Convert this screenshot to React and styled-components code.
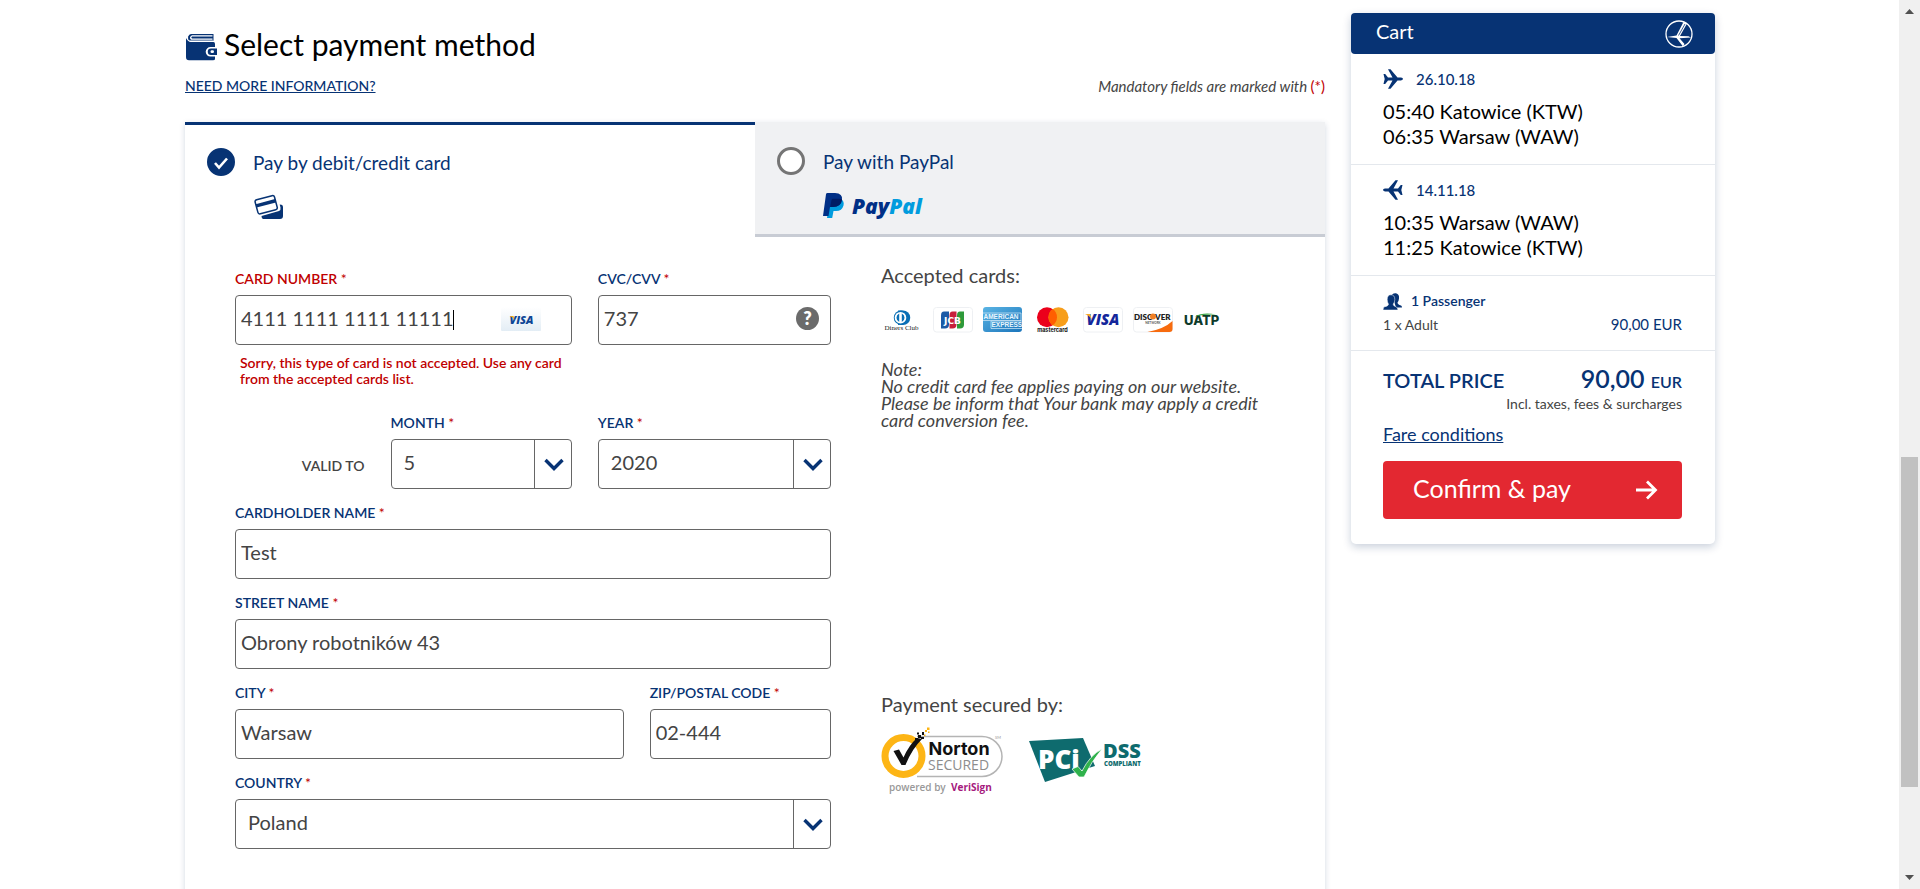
import React from "react";
import styled, { createGlobalStyle, css } from "styled-components";

const navy = "#073374";
const grey = "#444444";
const red = "#bf0000";
const line = "#e4e8ed";

const GlobalStyle = createGlobalStyle`
  *, *::before, *::after { box-sizing: border-box; }
  html, body { margin: 0; padding: 0; background: #ffffff; }
  body { font-family: Lato, "Open Sans", sans-serif; color: ${grey}; overflow: hidden; }
  button, input, select { font-family: inherit; }
  svg { display: block; flex: none; }
`;

const Page = styled.div`
  display: flex;
  height: 100vh;
  overflow: hidden;
`;

const Viewport = styled.div`
  flex: 1;
  min-width: 0;
  display: flex;
  justify-content: center;
  padding-left: 1px;
`;

const Container = styled.div`
  flex: 1;
  max-width: 1530px;
  display: flex;
  gap: 26px;
`;

const Main = styled.main`
  flex: 1;
  min-width: 0;
  display: flex;
  flex-direction: column;
  padding-top: 25px;
`;

const Heading = styled.h1`
  display: flex;
  align-items: center;
  gap: 6px;
  margin: 0;
  font-size: 30px;
  line-height: 38px;
  font-weight: 400;
  color: #000000;

  svg { margin-top: 6px; }
`;

const IntroRow = styled.div`
  display: flex;
  justify-content: space-between;
  margin: 13px 0 26px;
  font-size: 15px;
  line-height: 20px;
`;

const InfoLink = styled.a`
  color: ${navy};
  font-size: 14px;
  font-weight: 500;
`;

const Mandatory = styled.span`
  font-style: italic;
`;

const Star = styled.span`
  color: ${red};
  font-style: normal;
  font-weight: 400;
`;

const Panel = styled.section`
  flex: 1 0 auto;
  background: #ffffff;
  box-shadow: 0 2px 6px rgba(10, 40, 90, 0.18);
`;

const Tabs = styled.div`
  display: grid;
  grid-template-columns: 1fr 1fr;
`;

const Tab = styled.div`
  display: grid;
  grid-template-columns: 28px 1fr;
  column-gap: 18px;
  row-gap: 16px;
  align-content: start;
  height: 115px;
  padding: 23px 22px 0;
  ${(p) =>
    p.$active
      ? css`
          border-top: 3px solid ${navy};
          background: #ffffff;
        `
      : css`
          padding-top: 25px;
          border-bottom: 3px solid #c8ccd4;
          background: #f0f1f3;
        `}
`;

const TabLabel = styled.label`
  font-size: 19px;
  line-height: 30px;
  color: ${navy};
`;

const TabLogo = styled.div`
  grid-column: 2;
`;

const RadioWrap = styled.span`
  position: relative;
  width: 28px;
  height: 28px;

  svg {
    position: absolute;
    inset: 0;
    pointer-events: none;
  }
`;

const Radio = styled.input`
  appearance: none;
  display: block;
  width: 28px;
  height: 28px;
  margin: 0;
  border: 3px solid #757575;
  border-radius: 50%;
  background: #ffffff;

  &:checked {
    border-color: ${navy};
    background: ${navy};
  }
`;

const Body = styled.div`
  display: grid;
  grid-template-columns: 596fr 394fr;
  column-gap: 50px;
  padding: 26px 50px 50px;
`;

const Form = styled.form`
  display: grid;
  grid-template-columns: repeat(12, minmax(0, 1fr));
  column-gap: 26px;
  row-gap: 14px;
  margin-top: 6px;
`;

const FieldBox = styled.div`
  grid-column: ${(p) => p.$col};
  display: flex;
  flex-direction: column;
`;

const FieldLabel = styled.label`
  margin-bottom: 6px;
  font-size: 14px;
  line-height: 20px;
  font-weight: 600;
  color: ${(p) => (p.$error ? red : navy)};
`;

const Control = styled.div`
  position: relative;
`;

const controlStyle = css`
  display: block;
  width: 100%;
  height: 50px;
  border: 1px solid #666666;
  border-radius: 4px;
  background: #ffffff;
  color: ${grey};
  font-size: 20px;
  outline: none;
`;

const TextInput = styled.input`
  ${controlStyle}
  padding: 0 5px 4px;
`;

const Select = styled.select`
  ${controlStyle}
  appearance: none;
  padding: 0 40px 4px 12px;
`;

const SelectArrow = styled.span`
  position: absolute;
  top: 1px;
  right: 1px;
  bottom: 1px;
  width: 37px;
  display: flex;
  align-items: center;
  justify-content: center;
  padding-left: 2px;
  border-left: 1px solid #666666;
  pointer-events: none;
`;

const Caret = styled.span`
  position: absolute;
  left: 218px;
  top: 15px;
  width: 1px;
  height: 20px;
  background: #000000;
`;

const CardBadge = styled.span`
  position: absolute;
  right: 31px;
  top: 12px;
`;

const HelpButton = styled.button`
  position: absolute;
  right: 12px;
  top: 12px;
  width: 23px;
  height: 23px;
  padding: 0;
  border: 0;
  border-radius: 50%;
  background: #6b6b6b;
  color: #ffffff;
  font-size: 18px;
  line-height: 23px;
  font-weight: 800;
`;

const ErrorText = styled.p`
  margin: 10px 0 12px 5px;
  font-size: 14px;
  line-height: 16px;
  font-weight: 600;
  color: ${red};
`;

const ValidTo = styled.div`
  grid-column: 1 / span 3;
  margin-top: 43px;
  font-size: 14px;
  line-height: 20px;
  font-weight: 600;
  text-align: right;
`;

const Side = styled.div`
  display: flex;
  flex-direction: column;
  justify-content: space-between;
  padding-bottom: 54px;
`;

const SideTitle = styled.h2`
  margin: 0;
  font-size: 20px;
  line-height: 24px;
  font-weight: 400;
`;

const Cards = styled.div`
  display: flex;
  gap: 10px;
  padding: 20px 0 28px 2px;
`;

const Note = styled.p`
  margin: 0;
  max-width: 390px;
  font-size: 18px;
  line-height: 17px;
  font-style: italic;
`;

const Seals = styled.div`
  display: flex;
  align-items: center;
  gap: 24px;
  margin-top: 11px;
`;

const Cart = styled.aside`
  flex: none;
  align-self: flex-start;
  width: 364px;
  margin-top: 13px;
  padding-bottom: 25px;
  border-radius: 5px;
  background: #ffffff;
  box-shadow: 0 3px 8px rgba(10, 40, 90, 0.22);
`;

const CartHeader = styled.header`
  display: flex;
  align-items: center;
  justify-content: space-between;
  height: 41px;
  padding: 0 22px 0 25px;
  border-radius: 4px;
  background: ${navy};
  color: #ffffff;
`;

const CartTitle = styled.h2`
  margin: 0 0 6px;
  font-size: 20px;
  line-height: 24px;
  font-weight: 400;
`;

const CartBlock = styled.div`
  padding: ${(p) => p.$pad};
  border-bottom: ${(p) => (p.$last ? "0" : `1px solid ${line}`)};
`;

const CartMeta = styled.div`
  display: flex;
  align-items: center;
  gap: ${(p) => p.$gap || "13px"};
  font-size: ${(p) => p.$size || "15px"};
  line-height: 20px;
  font-weight: ${(p) => p.$weight || 500};
  color: ${navy};
`;

const Leg = styled.div`
  font-size: 20px;
  line-height: 25px;
  color: #000000;
`;

const Legs = styled.div`
  margin-top: 10px;
`;

const SplitRow = styled.div`
  display: flex;
  align-items: baseline;
  justify-content: space-between;
  font-size: ${(p) => p.$size};
  line-height: ${(p) => p.$line};
  font-weight: ${(p) => p.$weight || 400};
`;

const Amount = styled.span`
  color: ${navy};
  font-size: ${(p) => p.$size};
`;

const Total = styled.span`
  font-size: 20px;
  color: ${navy};
`;

const Currency = styled.small`
  font-size: 16px;
`;

const Taxes = styled.div`
  font-size: 14px;
  line-height: 16px;
  text-align: right;
`;

const FareLink = styled.a`
  display: inline-block;
  margin: 10px 0 15px;
  font-size: 18px;
  line-height: 24px;
  color: ${navy};
`;

const PayButton = styled.button`
  display: flex;
  align-items: center;
  justify-content: space-between;
  width: 100%;
  height: 58px;
  padding: 0 24px 4px 30px;
  border: 0;
  border-radius: 4px;
  background: #e32831;
  color: #ffffff;
  font-size: 25px;

  svg { margin-top: 4px; }
`;

const ScrollTrack = styled.div`
  flex: none;
  display: flex;
  flex-direction: column;
  align-items: center;
  justify-content: space-between;
  width: 21px;
  padding: 9px 0;
  background: #f0f0f0;
`;

const ScrollRail = styled.div`
  flex: 1;
  display: flex;
  flex-direction: column;
  align-self: stretch;
  margin: 0 2px;

  &::before { content: ""; flex: 443 0 0; }
  &::after { content: ""; flex: 88 0 0; }
`;

const ScrollThumb = styled.div`
  flex: 330 0 0;
  background: #c1c1c1;
`;

const Wallet = () => (
  <svg width="33" height="28" viewBox="0 0 33 28" aria-hidden="true">
    <path d="M6 1h22.500v7H5Q2.500 7 3.200 3.500 4 1 6 1z" fill={navy} />
    <path d="M7 2.300h20.500v1.200H7q-1.500 1 0 2h20.500v1.200H6Q3.500 4.500 7 2.300z" fill="#fff" />
    <path d="M1 5q2 4 5 4h22.500q1.500 0 1.500 2v3h-4.500a4.800 4.800 0 0 0 0 9.600H30V26q0 1.300-2 1.300H4Q1 27.300 1 24z" fill={navy} />
    <path d="M4 7.600h24.500v1.200H6q-1.500 0-2-1.200z" fill="#fff" />
    <path d="M26 15.500h6v6.500h-6a3.250 3.250 0 0 1 0-6.500z" fill={navy} />
    <rect x="25.500" y="17.300" width="3.500" height="2.800" rx="1.400" fill="#fff" />
  </svg>
);

const CreditCards = () => (
  <svg width="30" height="27" viewBox="-1 1 30 27" aria-hidden="true">
    <path d="M9 26q-1.500-.5-1.500-3L25 18q2-1 1.500-3.500l-.8-3 1.800.3q1.500.4 1.500 2.200v9q0 3-3 3z" fill={navy} />
    <g transform="rotate(-15 12 11)">
      <rect x="2" y="4.500" width="20" height="14.500" rx="2" fill="#fff" stroke={navy} strokeWidth="1.500" />
      <path d="M2 8.500h20v3.500H2z" fill={navy} />
    </g>
  </svg>
);

const PayPalLogo = () => (
  <svg width="102" height="28" viewBox="0 0 102 28" role="img" aria-label="PayPal">
    <path d="M7 6h11q3.500 2 2.500 6.500Q19 18 13 18h-2.500L9.200 25H4z" fill="#019cde" />
    <path d="M4.500 0H12q8 .3 7 7-1.200 7-9 7H7L5.500 23H0L3 1.200Q3.200 0 4.500 0z" fill="#002f86" />
    <path d="M8.500 7q.3-1.200 1.500-1.200h7q1.200 0 2 .7Q18 14 10 14H7.200z" fill="#001c64" />
    <text y="21" x="29" fontFamily="Open Sans, Lato, sans-serif" fontSize="21" fontWeight="800" fontStyle="italic">
      <tspan fill="#002f86">Pay</tspan><tspan fill="#019cde">Pal</tspan>
    </text>
  </svg>
);

const Chevron = () => (
  <svg width="20" height="13" viewBox="0 0 20 13" aria-hidden="true">
    <path d="M1.500 2l8.500 8.500L18.500 2" fill="none" stroke={navy} strokeWidth="3.400" />
  </svg>
);

const CardFrame = ({ label, children }) => (
  <svg width="40" height="26" viewBox="0 0 40 26" role="img" aria-label={label}>
    {children}
  </svg>
);

const Outline = () => <rect x=".5" y=".5" width="39" height="24.500" rx="3" fill="#fff" stroke="#eef0f3" />;

const Diners = () => (
  <CardFrame label="Diners Club">
    <path d="M15 3.500h5a7.200 7.200 0 0 1 0 14.500h-5z" fill="#0a6fb5" />
    <circle cx="18" cy="10.700" r="7.200" fill="#0a6fb5" />
    <circle cx="17.500" cy="10.700" r="5.800" fill="#fff" />
    <path d="M16.200 6.500a4.600 4.600 0 0 0 0 8.400zM18.800 6.500a4.600 4.600 0 0 1 0 8.400z" fill="#0a6fb5" />
    <text x="18.500" y="22.500" textAnchor="middle" fontSize="7" fontFamily="Liberation Serif, serif" fill="#222">Diners Club</text>
  </CardFrame>
);

const Jcb = () => (
  <CardFrame label="JCB">
    <Outline />
    <path d="M11 4.500h5v13q0 4-4 4H8v-13q0-4 3-4z" fill="#1b5aa6" />
    <path d="M19.500 4.500h4v13q0 4-4 4h-3v-13q0-4 3-4z" fill="#c8203c" />
    <path d="M27 4.500h4v13q0 4-4 4h-3v-13q0-4 3-4z" fill="#2e9a3a" />
    <text x="19.500" y="16.500" textAnchor="middle" fontSize="9" fontWeight="700" fontFamily="DejaVu Sans, sans-serif" fill="#fff">JCB</text>
  </CardFrame>
);

const Amex = () => (
  <CardFrame label="American Express">
    <defs>
      <linearGradient id="amex" x1="0" x2="1" y1="0" y2="1">
        <stop offset="0" stopColor="#5ab4e4" />
        <stop offset="1" stopColor="#1b75bb" />
      </linearGradient>
    </defs>
    <rect y="0" width="39" height="25" rx="3" fill="url(#amex)" />
    <path d="M0 6h38v7.500H0M39 14H8v7.500h31" fill="none" stroke="#d7edf9" strokeWidth=".7" />
    <g fontFamily="Liberation Sans, sans-serif" fontSize="6.500" fontWeight="700" fill="#e8f5fd">
      <text x=".5" y="12">AMERICAN</text>
      <text x="8.500" y="20">EXPRESS</text>
    </g>
  </CardFrame>
);

const Mastercard = () => (
  <CardFrame label="Mastercard">
    <circle cx="14" cy="10.200" r="10" fill="#eb001b" />
    <circle cx="25.500" cy="10.200" r="10" fill="#f79e1b" />
    <path d="M19.700 2a10 10 0 0 1 0 16.400 10 10 0 0 1 0-16.400z" fill="#ff5f00" />
    <text x="19.500" y="24.500" textAnchor="middle" fontSize="5.500" fontWeight="700" fontFamily="Inter, sans-serif" fill="#111">mastercard</text>
  </CardFrame>
);

const Visa = () => (
  <CardFrame label="Visa">
    <Outline />
    <text x="20" y="18" textAnchor="middle" fontSize="15" fontWeight="800" fontStyle="italic" fontFamily="Open Sans, sans-serif" fill="#14279b">VISA</text>
    <path d="M2 7h5l2 6q-2.500-4.500-7-6z" fill="#f7a823" />
  </CardFrame>
);

const Discover = () => (
  <CardFrame label="Discover">
    <Outline />
    <path d="M14.500 25Q31 22 39.500 14v8q0 3-3 3z" fill="#f76b0e" />
    <g fontFamily="Lato, sans-serif" fontWeight="800" fontSize="8" fill="#222">
      <text x="1" y="12.500">DISC</text>
      <text x="22" y="12.500">VER</text>
    </g>
    <circle cx="20" cy="9.600" r="3" fill="#f08026" />
    <text x="20" y="17" fontSize="3" fontWeight="700" fontFamily="Lato, sans-serif" textAnchor="middle" fill="#555">NETWORK</text>
  </CardFrame>
);

const Uatp = () => (
  <CardFrame label="UATP">
    <text x="1" y="18" fontSize="13" fontWeight="800" fontFamily="Inter, sans-serif" fill="#0e3b2b">UATP</text>
    <path d="M11.500 9.500Q20 5 33 7.500q-12-.5-21.500 2z" fill="#3da648" />
  </CardFrame>
);

const InlineVisa = () => (
  <svg width="40" height="24" viewBox="0 0 40 24" role="img" aria-label="Visa">
    <defs>
      <linearGradient id="visaBg" x1="0" x2="0" y1="0" y2="1">
        <stop offset="0" stopColor="#ffffff" />
        <stop offset="1" stopColor="#e3edf5" />
      </linearGradient>
    </defs>
    <rect width="40" height="24" rx="1" fill="url(#visaBg)" />
    <text x="20.500" y="17" textAnchor="middle" fontSize="11" fontWeight="800" fontStyle="italic" fontFamily="Open Sans, sans-serif" fill="#0e4595">VISA</text>
    <path d="M8.500 9h4l1 4q-1.500-3-5-4z" fill="#f2ae14" />
  </svg>
);

const Norton = () => (
  <svg width="124" height="68" viewBox="0 0 124 68" role="img" aria-label="Norton Secured">
    <path d="M36 9.500h65a20 20 0 0 1 0 40H36" fill="#fff" stroke="#b4b4b4" strokeWidth="1.500" />
    <circle cx="22.500" cy="29" r="18.500" fill="#fff" stroke="#fdb515" strokeWidth="7" />
    <path d="M12.500 24l5.500-1.500 4.500 8Q28 18 36 11l5 1Q31 22 24.500 38h-4z" fill="#111" />
    <path d="M37 8h3v3h-3zM41 5h2v3h-2zM40 10h3v2h-3zM34 11h3v3h-3zM36 5.500h2v2h-2z" fill="#111" />
    <path d="M44 3h2v2h-2zM46 .5h2.500V3H46zM43 7.500h1.500V9H43zM47 4.500h1.500V6H47z" fill="#fdb515" />
    <text x="47.500" y="28" fontSize="18" fontWeight="700" fontFamily="Inter, sans-serif" fill="#111">Norton</text>
    <text x="47" y="43" fontSize="14" fontWeight="500" fontFamily="Open Sans, sans-serif" fill="#8d8d8d">SECURED</text>
    <text x="114" y="12" fontSize="4" fontFamily="Lato, sans-serif" fill="#999">SM</text>
    <text x="8" y="64" fontSize="10" fontWeight="600" fontFamily="Open Sans, sans-serif" fill="#999">powered by</text>
    <text x="70" y="64" fontSize="10" fontWeight="700" fontFamily="Open Sans, sans-serif" fill="#a5197d">VeriSign</text>
  </svg>
);

const Pci = () => (
  <svg width="116" height="46" viewBox="0 0 116 46" role="img" aria-label="PCI DSS compliant">
    <path d="M0 3L54 0l12 28-50 16z" fill="#0e6b6e" />
    <g fontFamily="Open Sans, sans-serif" fontWeight="800">
      <text x="9" y="31" fontSize="26" fill="#fff">PCi</text>
      <text x="74" y="20" fontSize="20" fill="#0e6b6e">DSS</text>
      <text x="75" y="28" fontSize="6" fill="#0e6b6e">COMPLIANT</text>
    </g>
    <path d="M43 31l6-2.500 4 4.500Q61 17 73 11 62 24 55 39h-5z" fill="#2fb24c" stroke="#fff" strokeWidth=".7" />
  </svg>
);

const CraneLogo = () => (
  <svg width="28" height="28" viewBox="0 0 28 28" aria-hidden="true">
    <circle cx="14" cy="14" r="13" fill="none" stroke="#fff" strokeWidth="1.300" />
    <path d="M18.500 2l3.500 1.500L15 16l8.500.3L26 17.500l-11.500.8L19.500 24l-1.500 2.500L11.500 18 2 17l9.500-1.500z" fill="#fff" />
    <path d="M20 4l-6.500 11.500" stroke={navy} strokeWidth=".8" fill="none" />
  </svg>
);

const Plane = ({ back }) => (
  <svg width="20" height="20" viewBox="0 0 20 20" aria-hidden="true">
    <path
      transform={back ? "translate(20 0) scale(-1 1)" : undefined}
      d="M.5 5h1.700L5 8.600h4.500L5 .3h2.500l7 8.300H18q2 .4 2 1.400t-2 1.400h-3.500l-7 8.300H5l4.500-8.300H5L2.200 15H.5L1.700 10z"
      fill={navy}
    />
  </svg>
);

const People = () => (
  <svg width="19" height="17" viewBox="0 0 19 17" aria-hidden="true">
    <path d="M9 1.500Q11 0 13 .3q3.500.8 3 5.200-.3 3-1.500 4 0 2 3.500 3 1 .5 1 2h-6z" fill={navy} />
    <path d="M8 1.800q3.800 0 3.800 4.700 0 2.700-1.600 4.700 0 1.800 2.800 2.600 1.500.6 2 3.200H0q.2-2.600 1.500-3.200 4-.8 4-2.600Q4.200 9.200 4.200 6.500q0-4.700 3.800-4.700z" fill={navy} stroke="#fff" strokeWidth=".5" />
  </svg>
);

const Arrow = () => (
  <svg width="22" height="20" viewBox="0 0 22 20" aria-hidden="true">
    <path d="M0 10h19M11 1.500l8.500 8.500-8.500 8.500" fill="none" stroke="#fff" strokeWidth="2.800" />
  </svg>
);

const ScrollArrow = ({ down }) => (
  <svg width="9" height="5" viewBox="0 0 9 5" aria-hidden="true">
    <path d={down ? "M0 0h9L4.500 5z" : "M4.500 0L9 5H0z"} fill="#505050" />
  </svg>
);

function Field({ id, label, col, error, children, after }) {
  return (
    <FieldBox $col={col}>
      <FieldLabel htmlFor={id} $error={error}>
        {label} <Star>*</Star>
      </FieldLabel>
      <Control>{children}</Control>
      {after}
    </FieldBox>
  );
}

function SelectBox({ id, value }) {
  return (
    <>
      <Select id={id} defaultValue={value}>
        <option>{value}</option>
      </Select>
      <SelectArrow>
        <Chevron />
      </SelectArrow>
    </>
  );
}

function Flight({ date, from, to, back }) {
  return (
    <CartBlock $pad="15px 32px">
      <CartMeta>
        <Plane back={back} />
        {date}
      </CartMeta>
      <Legs>
        <Leg>{from}</Leg>
        <Leg>{to}</Leg>
      </Legs>
    </CartBlock>
  );
}

export default function App() {
  return (
    <>
      <GlobalStyle />
      <Page>
        <Viewport>
          <Container>
            <Main>
              <Heading>
                <Wallet />
                Select payment method
              </Heading>
              <IntroRow>
                <InfoLink href="#info">NEED MORE INFORMATION?</InfoLink>
                <Mandatory>
                  Mandatory fields are marked with <Star>(*)</Star>
                </Mandatory>
              </IntroRow>
              <Panel>
                <Tabs>
                  <Tab $active>
                    <RadioWrap>
                      <Radio type="radio" name="method" id="method-card" defaultChecked />
                      <svg width="28" height="28" viewBox="0 0 28 28" aria-hidden="true">
                        <path d="M8 15l4 4.500 8-9" fill="none" stroke="#fff" strokeWidth="2.600" />
                      </svg>
                    </RadioWrap>
                    <TabLabel htmlFor="method-card">Pay by debit/credit card</TabLabel>
                    <TabLogo>
                      <CreditCards />
                    </TabLogo>
                  </Tab>
                  <Tab>
                    <RadioWrap>
                      <Radio type="radio" name="method" id="method-paypal" />
                    </RadioWrap>
                    <TabLabel htmlFor="method-paypal">Pay with PayPal</TabLabel>
                    <TabLogo>
                      <PayPalLogo />
                    </TabLogo>
                  </Tab>
                </Tabs>
                <Body>
                  <Form>
                    <Field
                      id="number"
                      label="CARD NUMBER"
                      col="1 / span 7"
                      error
                      after={
                        <ErrorText>
                          Sorry, this type of card is not accepted. Use any card from the accepted cards list.
                        </ErrorText>
                      }
                    >
                      <TextInput id="number" defaultValue="4111 1111 1111 11111" />
                      <Caret />
                      <CardBadge>
                        <InlineVisa />
                      </CardBadge>
                    </Field>
                    <Field id="cvc" label="CVC/CVV" col="8 / span 5">
                      <TextInput id="cvc" defaultValue="737" />
                      <HelpButton type="button">?</HelpButton>
                    </Field>
                    <ValidTo>VALID TO</ValidTo>
                    <Field id="month" label="MONTH" col="4 / span 4">
                      <SelectBox id="month" value="5" />
                    </Field>
                    <Field id="year" label="YEAR" col="8 / span 5">
                      <SelectBox id="year" value="2020" />
                    </Field>
                    <Field id="holder" label="CARDHOLDER NAME" col="1 / span 12">
                      <TextInput id="holder" defaultValue="Test" />
                    </Field>
                    <Field id="street" label="STREET NAME" col="1 / span 12">
                      <TextInput id="street" defaultValue="Obrony robotników 43" />
                    </Field>
                    <Field id="city" label="CITY" col="1 / span 8">
                      <TextInput id="city" defaultValue="Warsaw" />
                    </Field>
                    <Field id="zip" label="ZIP/POSTAL CODE" col="9 / span 4">
                      <TextInput id="zip" defaultValue="02-444" />
                    </Field>
                    <Field id="country" label="COUNTRY" col="1 / span 12">
                      <SelectBox id="country" value="Poland" />
                    </Field>
                  </Form>
                  <Side>
                    <div>
                      <SideTitle>Accepted cards:</SideTitle>
                      <Cards>
                        <Diners />
                        <Jcb />
                        <Amex />
                        <Mastercard />
                        <Visa />
                        <Discover />
                        <Uatp />
                      </Cards>
                      <Note>
                        Note:
                        <br />
                        No credit card fee applies paying on our website. Please be inform that Your bank may apply a
                        credit card conversion fee.
                      </Note>
                    </div>
                    <div>
                      <SideTitle>Payment secured by:</SideTitle>
                      <Seals>
                        <Norton />
                        <Pci />
                      </Seals>
                    </div>
                  </Side>
                </Body>
              </Panel>
            </Main>
            <Cart>
              <CartHeader>
                <CartTitle>Cart</CartTitle>
                <CraneLogo />
              </CartHeader>
              <Flight date="26.10.18" from="05:40 Katowice (KTW)" to="06:35 Warsaw (WAW)" />
              <Flight back date="14.11.18" from="10:35 Warsaw (WAW)" to="11:25 Katowice (KTW)" />
              <CartBlock $pad="15px 33px 12px 32px">
                <CartMeta $gap="9px" $size="14px" $weight={600}>
                  <People />1 Passenger
                </CartMeta>
                <SplitRow $size="14px" $line="26px">
                  <span>1 x Adult</span>
                  <Amount $size="15px">90,00 EUR</Amount>
                </SplitRow>
              </CartBlock>
              <CartBlock $last $pad="13px 33px 0 32px">
                <SplitRow $size="20px" $line="28px" $weight={600}>
                  <Total>TOTAL PRICE</Total>
                  <Amount $size="25px">
                    90,00 <Currency>EUR</Currency>
                  </Amount>
                </SplitRow>
                <Taxes>Incl. taxes, fees &amp; surcharges</Taxes>
                <FareLink href="#fare">Fare conditions</FareLink>
                <PayButton type="button">
                  Confirm &amp; pay
                  <Arrow />
                </PayButton>
              </CartBlock>
            </Cart>
          </Container>
        </Viewport>
        <ScrollTrack aria-hidden="true">
          <ScrollArrow />
          <ScrollRail>
            <ScrollThumb />
          </ScrollRail>
          <ScrollArrow down />
        </ScrollTrack>
      </Page>
    </>
  );
}
